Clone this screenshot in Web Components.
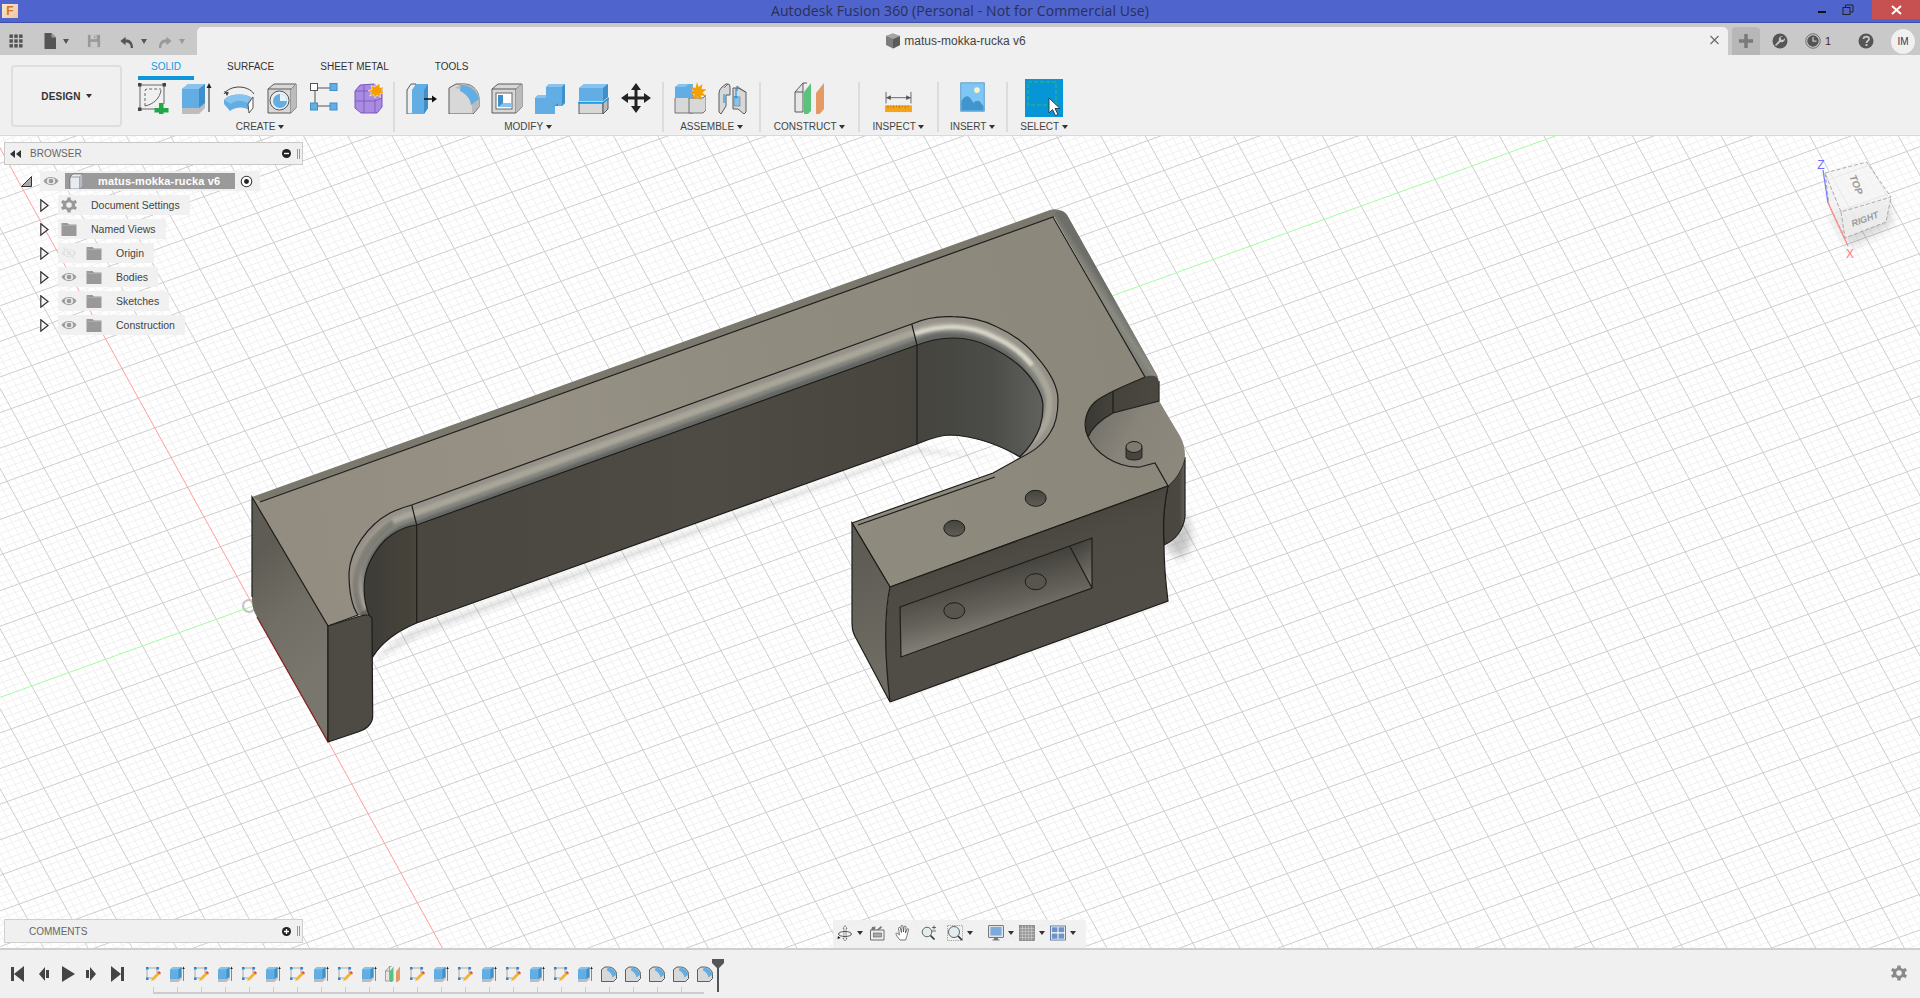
<!DOCTYPE html>
<html>
<head>
<meta charset="utf-8">
<title>Fusion 360</title>
<style>
  html, body { margin: 0; height: 100%; overflow: hidden; background: #f0f0f0; font-family: "Liberation Sans", Arial, sans-serif; }
  body { display: flex; flex-direction: column; height: 998px; }
</style>
</head>
<body>
<fx-titlebar></fx-titlebar>
<fx-tabbar></fx-tabbar>
<fx-toolbar></fx-toolbar>
<fx-viewport></fx-viewport>
<fx-timeline></fx-timeline>

<script>
// all icons on a 32x32 box
const GR = '#d8d8d8', OUT = '#5a5a5a', BL = '#62ade4', BLD = '#3f8fc9', BLL = '#86c3ef';
const ICONS = {
  sketch: `<g fill="none" stroke="#666" stroke-width="1"><path d="M3 3H27M3 3V27M3 27H22M27 3V22"/><path d="M8 24V9q0-2 2-2H24" stroke-dasharray="3 2"/><path d="M8 24C17 22 23 16 24 8"/></g>
    <g fill="#444"><rect x="1" y="1" width="3.5" height="3.5"/><rect x="25.5" y="1" width="3.5" height="3.5"/><rect x="1" y="25.5" width="3.5" height="3.5"/></g>
    <path d="M22 21h4.5v5H31.500v4.500H26.500V32H22V30.500H17.500V26H22z" fill="#22a64a"/>`,
  extrude: `<path d="M2 7l6-5h17v22l-6 5H2z" fill="${BL}"/><path d="M2 7l6-5h17l-6 5z" fill="${BLL}"/><path d="M19 7l6-5v22l-6 5z" fill="${BLD}"/>
    <path d="M2 26h17l6-5v5l-6 6H2z" fill="#bdbdbd"/><path d="M29 30V4" stroke="#222" stroke-width="1" /><path d="M29 1l-2.500 5h5z" fill="#222"/>`,
  revolve: `<path d="M1 12C4 7 11 5 16 5s12 2 15 7" fill="none" stroke="#444" stroke-width="1"/><path d="M1 9l3 5 2-3.500z" fill="#444"/>
    <path d="M1 18C6 11 24 11 29 16l-3 12c-6-4-14-3-19 1l-6-7z" fill="${BL}"/><path d="M1 18C6 11 24 11 29 16l-5 5c-5-3-12-3-16 1z" fill="${BLL}"/>
    <path d="M25 22l5-7v11l-4 5z" fill="#fff" stroke="#555"/>`,
  hole: `<path d="M2 7l6-5h22v24l-5 5H2z" fill="${GR}" stroke="${OUT}"/><path d="M2 7h23v24M25 7l5-5" fill="none" stroke="${OUT}"/><path d="M25 7l5-5v24l-5 5z" fill="#bbb"/>
    <circle cx="13.500" cy="18.500" r="9.500" fill="#eee" stroke="#555"/><circle cx="14" cy="19" r="7" fill="${BL}"/><path d="M14 12a7 7 0 0 1 7 7h-7z" fill="#e8f3fb"/>`,
  pattern: `<g stroke="#555"><path d="M6 6H22M6 6V24M6 24H22" fill="none"/><rect x="1.500" y="1.500" width="7" height="7" fill="#fff"/></g>
    <g fill="${BL}" stroke="${BLD}"><rect x="21" y="1.500" width="7" height="7"/><rect x="1.500" y="21" width="7" height="7"/><rect x="21" y="21" width="7" height="7"/></g>`,
  form: `<path d="M3 9l5-6 14-1 8 6v17l-5 6H9l-6-5z" fill="#a98be0" stroke="#7a55c4"/><path d="M3 9h20l7-2M23 9v22M3 19h20l7-3M12 3v28" fill="none" stroke="#7a55c4" stroke-width=".8"/>
    <path d="M23 0l1.500 4 3-3 .5 4.500 4-.5-2.500 3.500 2.500 2.500-4 .5.500 4-3.500-2.500-2 3.500-1.500-4-4 1.500 2-3.500-3.500-2 4-1-1-4 4 1.500z" fill="#f5a000" stroke="#fff" stroke-width=".5"/>`,
  presspull: `<path d="M2 8l4-6h5v30H2z" fill="#eee" stroke="${OUT}"/><path d="M7 8l4-6h12v24l-4 6H7z" fill="${BL}"/><path d="M19 8l4-6v24l-4 6z" fill="${BLD}"/>
    <path d="M19 17H29" stroke="#111" stroke-width="1.500"/><path d="M32 17l-5-3.500v7z" fill="#111"/>`,
  fillet: `<path d="M1 6l7-4h8c9 0 15 7 15 15v8l-6 7H1z" fill="${GR}" stroke="${OUT}"/><path d="M24 31c1-14-3-22-17-25l7-4c10 0 17 6 17 14v9z" fill="#bbb"/><path d="M13 3c9 0 16 6 18 14l-8 6c-1-7-5-11-11-14z" fill="${BL}"/>`,
  shell: `<path d="M1 7l6-5h24v23l-6 6H1z" fill="${GR}" stroke="${OUT}"/><path d="M1 7h24v24M25 7l6-5" fill="none" stroke="${OUT}"/><path d="M25 7l6-5v23l-6 6z" fill="#bbb"/>
    <rect x="5" y="11" width="16" height="16" fill="#fff" stroke="#666"/><path d="M7 13h5v8h8v4H7z" fill="${BLD}"/><path d="M12 13h8v8h-8z" fill="#fff"/><path d="M12 21h8v4H7z" fill="${BLL}"/>`,
  combine: `<path d="M1 16l3-3h8V5l3-3h16v19l-3 3h-7v8H1z" fill="${BL}"/><path d="M12 5l3-3h16l-3 3zM1 16l3-3h8v3z" fill="${BLL}"/><path d="M28 5l3-3v19l-3 3zM19 24h5v-3l-5 4z" fill="${BLD}"/>`,
  split: `<path d="M2 6l5-4h24v13l-5 4-24 0z" fill="${BL}"/><path d="M2 6l5-4h24l-5 4z" fill="${BLL}"/><path d="M26 6l5-4v13l-5 4z" fill="${BLD}"/>
    <path d="M2 21h24v11H2z" fill="${GR}" stroke="${OUT}"/><path d="M26 21l5-4v10l-5 5z" fill="#bbb" stroke="${OUT}"/><path d="M1 20.500H26L32 16" fill="none" stroke="#1a9ce6" stroke-width="1.500"/>`,
  move: `<path d="M16 1l5 7h-3.500v6.500H24V11l7 5-7 5v-3.500h-6.500V24H21l-5 7-5-7h3.500v-6.500H8V21l-7-5 7-5v3.500h6.500V8H11z" fill="#222"/>`,
  newcomp: `<path d="M1 16l4-3h14v18H1z" fill="${GR}" stroke="${OUT}" stroke-width=".8"/><path d="M15 16h14l3-3v15l-3 3H15z" fill="${GR}" stroke="${OUT}" stroke-width=".8"/>
    <path d="M1 5l4-3h14l-1 14H1z" fill="${BL}"/><path d="M1 5l4-3h10l-4 3z" fill="${BLL}"/>
    <path d="M23 0l1.500 5 4-3-1 5 5 .5-4 3 3.500 3.500-5-.5-.5 5-3-4-4 3 1-5-5-1 4-3-3-4 5 1.500z" fill="#f5a000"/>`,
  joint: `<path d="M2 11q0-3 3-6l4-3h2q2 0 2 3v8H9V24l-5 8-2-2z" fill="${GR}" stroke="${OUT}"/><path d="M16 6l5 0 8 4v20l-2 2-6-5h-5z" fill="${GR}" stroke="${OUT}"/><path d="M20 4l8 6M20 4v5M7 6l4-4" fill="none" stroke="${OUT}" stroke-width=".8"/>
    <rect x="17" y="15" width="6" height="9" fill="${BLL}" stroke="#777" stroke-width=".6"/><path d="M19 6V16M7 12v9" stroke="#1a9ce6" stroke-width="1.200" fill="none"/><path d="M19 17l-2-3h4z" fill="#1a9ce6"/>`,
  construct: `<path d="M1 10l8-9v29H1z" fill="#e6e6e6" stroke="${OUT}"/><path d="M1 10h8M9 1l4 0" fill="none" stroke="${OUT}"/><path d="M10 10l7-9v28l-7 7z" fill="#5cc17d"/><path d="M22 11l8-10v26l-8 9z" fill="#e59a66"/>`,
  inspect: `<g fill="none" stroke="#666" stroke-width="1"><path d="M2 2V14M28 2V14M2 8H28"/></g><path d="M2 8l5-2.500v5zM28 8l-5-2.500v5z" fill="#555"/><rect x="1" y="16" width="28" height="7" fill="#f5a41b"/><path d="M4 16v3M7 16v2M10 16v3M13 16v2M16 16v3M19 16v2M22 16v3M25 16v2" stroke="#a86a00" stroke-width=".7"/>`,
  insert: `<rect x="1" y="1" width="29" height="35" fill="#7fc6f4" stroke="#4a95c7"/><circle cx="21" cy="10" r="3.500" fill="#f7f4c9"/><path d="M2 35V23c5-7 9-7 12-1l3 4c2-4 7-4 9 0l3 4v5z" fill="#3f95cc"/>`,
  select: `<rect width="38" height="38" fill="#0696d7"/><rect x="3" y="3" width="28" height="23" fill="none" stroke="#3fb868" stroke-width="1" stroke-dasharray="4 2"/><path d="M24 19v15l3.500-3.500 3 6 2.500-1-3-6h5z" fill="#fff" stroke="#333" stroke-width=".9"/>`,
  // timeline only
  tlsketch: `<g fill="none" stroke="#666" stroke-width="1"><path d="M4 4H24M4 4V24M4 24H14M24 4V14"/></g><g fill="#2289d8"><rect x="2" y="2" width="5" height="5"/><rect x="23" y="2" width="5" height="5"/><rect x="2" y="23" width="5" height="5"/></g>
    <path d="M12 30l2-6 12-12 4 4-12 12z" fill="#f0b33a"/><path d="M25 13l3-3 4 4-2 3z" fill="#e0503a"/>`,
  tlfillet: `<path d="M1 7l7-5h7c9 0 16 7 16 15v8l-6 6H1z" fill="${GR}" stroke="#333" stroke-width="1.500"/><path d="M13 3c9 0 16 6 18 14l-8 6c-1-7-5-11-11-14z" fill="${BL}"/>`,
  // browser, top bars, nav
  eye: `<path d="M1 16C8 5 24 5 31 16 24 27 8 27 1 16z" fill="#999"/><ellipse cx="16" cy="16" rx="8.500" ry="6.500" fill="#e8e8e8"/><circle cx="16" cy="16" r="4.500" fill="#999"/>`,
  eyeoff: `<path d="M1 16C8 5 24 5 31 16 24 27 8 27 1 16z" fill="#e2e2e2"/><ellipse cx="16" cy="16" rx="8.500" ry="6.500" fill="#f3f3f3"/><circle cx="16" cy="16" r="4.500" fill="#e2e2e2"/><path d="M5 5L27 27" stroke="#e2e2e2" stroke-width="2.500"/>`,
  folder: `<path d="M1 4h12l3 3h15v23H1z" fill="#999"/><path d="M1 9h30" stroke="#bbb" stroke-width="1"/>`,
  gear: `<path d="M13 1h6l1 5 4 2 5-2 3 5-4 3v4l4 3-3 5-5-2-4 2-1 5h-6l-1-5-4-2-5 2-3-5 4-3v-4l-4-3 3-5 5 2 4-2z" fill="#999"/><circle cx="16" cy="16" r="5.500" fill="#f0f0f0"/>`,
  box: `<path d="M4 8l6-6h19v24l-6 6H4z" fill="#e8ebf1" stroke="#444"/><path d="M4 8h19v24M23 8l6-6" fill="none" stroke="#444"/><path d="M23 8l6-6v24l-6 6z" fill="#b9bcc4"/>`,
  target: `<circle cx="16" cy="16" r="13" fill="#fff" stroke="#333" stroke-width="2.500"/><circle cx="16" cy="16" r="6" fill="#222"/>`,
  docbox: `<path d="M2 6l14-5 14 5v18L16 31 2 24z" fill="#7d7d7d"/><path d="M16 12L30 6v18L16 31z" fill="#5c5c5c"/><path d="M2 6l14 6L30 6 16 1z" fill="#a6a6a6"/>`,
  apps: `<g fill="#555"><rect x="1" y="1" width="8" height="8"/><rect x="12" y="1" width="8" height="8"/><rect x="23" y="1" width="8" height="8"/><rect x="1" y="12" width="8" height="8"/><rect x="12" y="12" width="8" height="8"/><rect x="23" y="12" width="8" height="8"/><rect x="1" y="23" width="8" height="8"/><rect x="12" y="23" width="8" height="8"/><rect x="23" y="23" width="8" height="8"/></g>`,
  file: `<path d="M5 0h14l9 9v23H5z" fill="#555"/><path d="M19 0v9h9z" fill="#999"/>`,
  save: `<path d="M2 2h28v28H2z" fill="#999"/><rect x="8" y="2" width="14" height="10" fill="#c8c8c8"/><rect x="16" y="4" width="3" height="6" fill="#999"/><rect x="8" y="18" width="16" height="12" fill="#c8c8c8"/>`,
  undo: `<path d="M14 6L3 15l11 9v-6c7 0 11 3 11 12h5c0-13-6-19-16-19z" fill="#555"/>`,
  redo: `<path d="M18 6l11 9-11 9v-6c-7 0-11 3-11 12H2c0-13 6-19 16-19z" fill="#999"/>`,
  wrench: `<circle cx="16" cy="16" r="15" fill="#555"/><path d="M22 6a7 7 0 0 0-8 9L6 24l2 2 9-8a7 7 0 0 0 9-8l-4 4-4-1-1-4z" fill="#c8c8c8"/>`,
  clock: `<circle cx="16" cy="16" r="14.500" fill="none" stroke="#555" stroke-width="1.500"/><circle cx="16" cy="16" r="11.500" fill="#555"/><path d="M16 8v8h7" fill="none" stroke="#c8c8c8" stroke-width="2.500"/>`,
  help: `<circle cx="16" cy="16" r="15" fill="#555"/><path d="M11 12q0-5 5.500-5t5.500 5c0 4-5 4-5 8" fill="none" stroke="#c8c8c8" stroke-width="3.500"/><rect x="15" y="22" width="4" height="4" fill="#c8c8c8"/>`,
  orbit: `<path d="M16 1l4 6h-2v20h2l-4 5-4-5h2V7h-2z" fill="#fff" stroke="#333"/><ellipse cx="16" cy="18" rx="13" ry="5" fill="none" stroke="#333" stroke-width="1.600"/><path d="M2 22l5 4-6 2z" fill="#111"/>`,
  lookat: `<path d="M3 10V30H30V10z" fill="#eee" stroke="#444" stroke-width="1.500"/><path d="M4 10l2-6 7-1-1 7zM15 10l9-8 2 3-6 5z" fill="#777"/><rect x="9" y="16" width="16" height="8" fill="#aaa" stroke="#444"/>`,
  hand: `<path d="M10 30C6 26 2 20 2 17c1-2 3-1 7 3L7 7c0-3 3-3 4 0l2 8-1-12c0-3 4-3 4 0l1 11 1-10c1-3 4-2 4 0l-1 12 3-7c1-3 4-2 3 1l-3 11c-1 5-2 6-3 9z" fill="#fff" stroke="#333" stroke-width="1.300"/>`,
  zoom: `<circle cx="12" cy="14" r="9.500" fill="#e3edf0" stroke="#555" stroke-width="1.800"/><path d="M19 21l8 8" stroke="#333" stroke-width="3.500"/><path d="M26 1v8M22 5h8M22 12h8" stroke="#333" stroke-width="1.400" fill="none"/>`,
  fit: `<rect x="1" y="1" width="30" height="30" fill="none" stroke="#555" stroke-dasharray="2.500 2"/><circle cx="14" cy="14" r="11" fill="#e3edf0" stroke="#555" stroke-width="1.800"/><path d="M22 22l8 8" stroke="#333" stroke-width="3.500"/>`,
  display: `<rect x="1" y="1" width="30" height="24" rx="1" fill="#dfe3ea" stroke="#555" stroke-width="1.500"/><rect x="5" y="4" width="22" height="17" fill="#7da9dc"/><path d="M12 25h8v4h3v2H9v-2h3z" fill="#777"/>`,
  gridv: `<rect x="1" y="1" width="30" height="30" fill="#999" stroke="#555"/><path d="M7 1v30M13 1v30M19 1v30M25 1v30M1 7h30M1 13h30M1 19h30M1 25h30" stroke="#d6d6d6" stroke-width="1"/>`,
  views: `<rect x="1" y="2" width="30" height="28" fill="#fff" stroke="#30558f" stroke-width="1.500"/><g fill="#6f93c6"><rect x="3.500" y="4.500" width="11.500" height="10"/><rect x="17" y="4.500" width="11.500" height="10"/><rect x="3.500" y="17" width="11.500" height="10.500"/><rect x="17" y="17" width="11.500" height="10.500"/></g>`
};
const svgIcon = (name, w, h, vb) => `<svg xmlns="http://www.w3.org/2000/svg" width="${w}" height="${h || w}" viewBox="${vb || '0 0 32 32'}" style="display:block;flex:none">${ICONS[name]}</svg>`;
const caret = `<span style="display:inline-block;width:0;height:0;border:solid transparent;border-width:4px 3px 0;border-top-color:#333;vertical-align:middle"></span>`;

class FxTitlebar extends HTMLElement {
  constructor() {
    super();
    this.attachShadow({ mode: 'open' }).innerHTML = `
      <style>
        :host { display: flex; align-items: center; justify-content: center; position: relative; height: 23px; box-sizing: border-box; background: #4f64cd; border-bottom: 1px solid #3c4ea8; flex: none; }
        span { font: 14px/22px "Open Sans", sans-serif; color: #28305a; letter-spacing: .09px; }
        .logo, .win { position: absolute; top: 0; }
        .logo { left: 2px; top: 4px; width: 16px; height: 14px; background: linear-gradient(135deg, #f9e6d4, #f1c59c); display: flex; align-items: center; justify-content: center; font: bold 12px "Liberation Sans", sans-serif; color: #d2761f; }
        .win { right: 0; display: flex; height: 19px; align-items: center; }
        .close { width: 48px; height: 19px; background: #c75050; display: flex; align-items: center; justify-content: center; margin-left: 9px; }
      </style>
      <div class="logo">F</div>
      <span>Autodesk Fusion 360 (Personal - Not for Commercial Use)</span>
      <div class="win">
        <svg width="45" height="19" viewBox="0 0 45 19"><rect x="0" y="11" width="8" height="2" fill="#111"/><rect x="25" y="7.500" width="7" height="7" fill="none" stroke="#222"/><path d="M27.500 7V5H35V12H32.500" fill="none" stroke="#222"/></svg>
        <div class="close"><svg width="11" height="10" viewBox="0 0 11 10"><path d="M1 1L10 9M10 1L1 9" stroke="#fff" stroke-width="2"/></svg></div>
      </div>`;
  }
}

class FxTabbar extends HTMLElement {
  constructor() {
    super();
    const ic = (n, ml, s) => `<span style="margin-left:${ml}px;display:block">${svgIcon(n, s || 15)}</span>`;
    this.attachShadow({ mode: 'open' }).innerHTML = `
      <style>
        :host { display: flex; height: 32px; padding-top: 4px; box-sizing: border-box; background: #c9c9c9; border-top: 0; flex: none; position: relative; }
        .quick { width: 197px; display: flex; align-items: center; height: 28px; flex: none; }
        .doc { width: 1531px; background: #f0f0f0; border-radius: 5px 5px 0 0; display: flex; align-items: center; justify-content: center; position: relative; font: 12px "Liberation Sans", sans-serif; color: #444; padding-right: 14px; box-sizing: border-box; }
        .doc svg { margin-right: 3px; }
        .x { position: absolute; right: 6px; top: 8px; }
        .plus { width: 28px; margin-left: 4px; background: #b7b7b7; border-radius: 4px 4px 0 0; display: flex; align-items: center; justify-content: center; flex: none; }
        .right { display: flex; align-items: center; }
        .num { font: 11px "Liberation Sans", sans-serif; color: #522; margin-left: 4px; }
        .avatar { width: 24px; height: 25px; border-radius: 50%; background: #f0f0f0; margin-left: 17px; display: flex; align-items: center; justify-content: center; font: 10px "Liberation Sans", sans-serif; color: #335; }
        .c { display: inline-block; width: 0; height: 0; border: solid transparent; border-width: 5px 3.500px 0; margin-left: 5px; }
      </style>
      <div class="quick">
        ${ic('apps', 9, 14)}
        ${ic('file', 19, 16)}<i class="c" style="border-top-color:#555"></i>
        ${ic('save', 18, 14)}
        ${ic('undo', 18, 15)}<i class="c" style="border-top-color:#555;margin-left:7px"></i>
        ${ic('redo', 11, 15)}<i class="c" style="border-top-color:#999;margin-left:6px"></i>
      </div>
      <div class="doc">
        ${svgIcon('docbox', 16)}<span>matus-mokka-rucka v6</span>
        <svg class="x" width="9" height="10" viewBox="0 0 9 10"><path d="M.5 1L8.500 9M8.500 1L.5 9" stroke="#666" stroke-width="1.100"/></svg>
      </div>
      <div class="plus"><svg width="14" height="14" viewBox="0 0 14 14"><path d="M7 0V14M0 7H14" stroke="#7a7a7a" stroke-width="3.500"/></svg></div>
      <div class="right">
        ${ic('wrench', 12, 16)}
        ${ic('clock', 17, 16)}<span class="num">1</span>
        ${ic('help', 27, 16)}
        <div class="avatar">IM</div>
      </div>`;
  }
}

class FxToolGroup extends HTMLElement {
  constructor() {
    super();
    const icons = (this.getAttribute('icons') || '').split(' ');
    const w = this.getAttribute('w');
    const pr = this.getAttribute('pr') || 0;
    const line = this.hasAttribute('last') ? '' : 'border-right:2px solid #dcdcdc;';
    const cells = icons.map(n => {
      if (n === 'inspect') return `<div class="cell" style="width:43px;padding-top:8px">${svgIcon(n, 29, 24, '0 0 30 25')}</div>`;
      if (n === 'insert') return `<div class="cell">${svgIcon(n, 29, 30, '0 0 31 37')}</div>`;
      if (n === 'select') return `<div class="cell" style="margin-top:-3px">${svgIcon(n, 38, 38, '0 0 38 38')}</div>`;
      return `<div class="cell">${svgIcon(n, 32)}</div>`;
    }).join('');
    this.attachShadow({ mode: 'open' }).innerHTML = `
      <style>
        :host { display: flex; flex-direction: column; align-items: center; width: ${w}px; box-sizing: border-box; ${line} padding-right: ${pr}px; height: 50px; flex: none; }
        .icons { display: flex; height: 34px; flex: none; }
        .cell { width: 43px; display: flex; justify-content: center; box-sizing: border-box; }
        .label { font: 10px/14px "Liberation Sans", sans-serif; color: #444; margin-top: 4px; white-space: nowrap; flex: none; }
      </style>
      <div class="icons">${cells}</div>
      <div class="label">${this.getAttribute('label')} ${caret}</div>`;
  }
}

class FxToolbar extends HTMLElement {
  constructor() {
    super();
    this.attachShadow({ mode: 'open' }).innerHTML = `
      <style>
        :host { display: flex; height: 81px; background: #f0f0f0; border-bottom: 1px solid #d9d9d9; box-sizing: border-box; padding-left: 11px; flex: none; }
        .design { width: 111px; height: 62px; margin-top: 10px; box-sizing: border-box; border: 2px solid #dedede; border-radius: 4px; display: flex; align-items: center; justify-content: center; gap: 5px; font: bold 10px "Liberation Sans", sans-serif; color: #333; letter-spacing: .2px; }
        .main { margin-left: 10px; display: flex; flex-direction: column; }
        .tabs { display: flex; gap: 20px; margin-left: 6px; height: 25px; font: 10px "Liberation Sans", sans-serif; color: #333; }
        .tabs div { padding: 6px 13px 0; box-sizing: border-box; height: 25px; line-height: 12px; }
        .tabs .on { color: #0f9be3; border-bottom: 4px solid #0f96d9; }
        .groups { display: flex; margin-top: 2px; }
      </style>
      <div class="design">DESIGN ${caret}</div>
      <div class="main">
        <div class="tabs"><div class="on">SOLID</div><div>SURFACE</div><div>SHEET METAL</div><div>TOOLS</div></div>
        <div class="groups">
          <fx-tool-group label="CREATE" w="263" pr="5" icons="sketch extrude revolve hole pattern form"></fx-tool-group>
          <fx-tool-group label="MODIFY" w="269" pr="1" icons="presspull fillet shell combine split move"></fx-tool-group>
          <fx-tool-group label="ASSEMBLE" w="97" icons="newcomp joint"></fx-tool-group>
          <fx-tool-group label="CONSTRUCT" w="99" icons="construct"></fx-tool-group>
          <fx-tool-group label="INSPECT" w="79" icons="inspect"></fx-tool-group>
          <fx-tool-group label="INSERT" w="69" icons="insert"></fx-tool-group>
          <fx-tool-group label="SELECT" w="72" icons="select" last></fx-tool-group>
        </div>
      </div>`;
  }
}

class FxTreeRow extends HTMLElement {
  constructor() {
    super();
    const eye = this.getAttribute('eye');
    const ic = this.getAttribute('icon');
    this.attachShadow({ mode: 'open' }).innerHTML = `
      <style>
        :host { display: flex; align-items: center; height: 20px; margin-bottom: 4px; padding-left: 36px; font: 10.500px "Liberation Sans", sans-serif; color: #444; }
        .bg { display: flex; align-items: center; height: 20px; margin-left: 9px; padding: 0 10px 0 3px; background: rgba(240,240,240,.92); white-space: nowrap; }
        .gap { width: 9px; } .gap2 { width: 14px; }
      </style>
      <svg width="9" height="13" viewBox="0 0 9 13" style="flex:none"><path d="M.8 .8L8 6.500.8 12.200z" fill="#f5f5f5" stroke="#333" stroke-width="1.200"/></svg>
      <div class="bg">
        ${eye ? svgIcon(eye, 16) + '<div class="gap"></div>' : ''}
        ${svgIcon(ic, 16)}<div class="gap2"></div>
        <slot></slot>
      </div>`;
  }
}

class FxBrowser extends HTMLElement {
  constructor() {
    super();
    this.attachShadow({ mode: 'open' }).innerHTML = `
      <style>
        :host { position: absolute; left: 4px; top: 6px; width: 299px; display: block; }
        .head { height: 23px; background: #f0f0f0; border: 1px solid #c9c9c9; box-sizing: border-box; display: flex; align-items: center; font: 10px "Liberation Sans", sans-serif; color: #666; padding-left: 5px; }
        .head span { margin-left: 9px; }
        .dot { margin-left: auto; margin-right: 6px; }
        .root { display: flex; align-items: center; height: 20px; margin: 6px 0 4px 17px; }
        .rbg { display: flex; align-items: center; height: 20px; width: 220px; margin-left: 8px; background: rgba(240,240,240,.92); padding-left: 3px; box-sizing: border-box; }
        .bar { display: flex; align-items: center; width: 170px; height: 16px; background: #9a9a9a; margin-left: 6px; font: bold 11px "Liberation Sans", sans-serif; color: #fff; white-space: nowrap; padding-left: 3px; box-sizing: border-box; }
        .bar span { margin-left: 14px; letter-spacing: .15px; }
      </style>
      <div class="head">
        <svg width="11" height="8" viewBox="0 0 11 8"><path d="M5 0v8L0 4zM11 0v8L6 4z" fill="#333"/></svg>
        <span>BROWSER</span>
        <svg class="dot" width="9" height="9" viewBox="0 0 9 9"><circle cx="4.500" cy="4.500" r="4.500" fill="#222"/><rect x="2" y="3.800" width="5" height="1.400" fill="#fff"/></svg>
        <svg width="3" height="10" viewBox="0 0 3 10" style="margin-right:2px"><path d="M.5 0V10M2.500 0V10" stroke="#999"/></svg>
      </div>
      <div class="root">
        <svg width="11" height="11" viewBox="0 0 11 11" style="flex:none"><path d="M10.500 .5V10.500H.5z" fill="#aaa" stroke="#333"/></svg>
        <div class="rbg">
          ${svgIcon('eye', 16)}
          <div class="bar">${svgIcon('box', 16)}<span>matus-mokka-rucka v6</span></div>
          <span style="margin-left:5px">${svgIcon('target', 13)}</span>
        </div>
      </div>
      <fx-tree-row icon="gear">Document Settings</fx-tree-row>
      <fx-tree-row icon="folder">Named Views</fx-tree-row>
      <fx-tree-row eye="eyeoff" icon="folder">Origin</fx-tree-row>
      <fx-tree-row eye="eye" icon="folder">Bodies</fx-tree-row>
      <fx-tree-row eye="eye" icon="folder">Sketches</fx-tree-row>
      <fx-tree-row eye="eye" icon="folder">Construction</fx-tree-row>`;
  }
}

class FxComments extends HTMLElement {
  constructor() {
    super();
    this.attachShadow({ mode: 'open' }).innerHTML = `
      <style>
        :host { position: absolute; left: 4px; bottom: 5px; width: 299px; height: 24px; box-sizing: border-box; background: #f0f0f0; border: 1px solid #d0d0d0; display: flex; align-items: center; font: 10px "Liberation Sans", sans-serif; color: #666; padding-left: 24px; }
        svg.p { margin-left: auto; margin-right: 6px; }
      </style>
      <span>COMMENTS</span>
      <svg class="p" width="9" height="9" viewBox="0 0 9 9"><circle cx="4.500" cy="4.500" r="4.500" fill="#222"/><path d="M2 4.500H7M4.500 2V7" stroke="#fff" stroke-width="1.300"/></svg>
      <svg width="3" height="10" viewBox="0 0 3 10" style="margin-right:2px"><path d="M.5 0V10M2.500 0V10" stroke="#999"/></svg>`;
  }
}

class FxNavbar extends HTMLElement {
  constructor() {
    super();
    const c = `<i style="display:block;width:0;height:0;border:solid transparent;border-width:4px 3px 0;border-top-color:#333;margin:0 0 0 4px"></i>`;
    const b = (n, ml) => `<span style="margin-left:${ml}px">${svgIcon(n, 16)}</span>`;
    this.attachShadow({ mode: 'open' }).innerHTML = `
      <style>
        :host { position: absolute; left: 833px; bottom: 0; width: 253px; height: 28px; padding-bottom: 3px; box-sizing: border-box; display: flex; align-items: center; background: rgba(240,240,240,.9); }
      </style>
      ${b('orbit', 4)}${c}${b('lookat', 6)}${b('hand', 10)}${b('zoom', 10)}${b('fit', 10)}${c}${b('display', 15)}${c}${b('gridv', 5)}${c}${b('views', 5)}${c}`;
  }
}

class FxViewport extends HTMLElement {
  constructor() {
    super();
    this.attachShadow({ mode: 'open' }).innerHTML = `
      <style>
        :host { display: block; position: relative; flex: 1; background: #fff; overflow: hidden; }
        svg.canvas { position: absolute; left: 0; top: 0; display: block; }
      </style>
      <svg class="canvas" width="1920" height="812" viewBox="0 136 1920 812">${this.grid()}${this.model()}${this.cube()}</svg>
      <fx-browser></fx-browser>
      <fx-comments></fx-comments>
      <fx-navbar></fx-navbar>`;
  }

  // the floor grid is orthographic: two families of parallel lines
  grid() {
    const ox = 253.3, oy = 606, a = 0.553, b = -0.361, da = 44.3, db = 35.6;
    const lineA = k => { const x = ox + k * da; return `M${(x + a * (136 - oy)).toFixed(1)} 136L${(x + a * (948 - oy)).toFixed(1)} 948`; };
    const lineB = k => { const y = oy + k * db; return `M0 ${(y + b * (0 - ox)).toFixed(1)}L1920 ${(y + b * (1920 - ox)).toFixed(1)}`; };
    let minor = '', major = '';
    for (let i = -200; i <= 250; i++) {
      const k = i / 5;
      if (i % 5 === 0) { if (i) major += lineA(k); } else minor += lineA(k);
    }
    for (let i = -150; i <= 150; i++) {
      const k = i / 5;
      if (i % 5 === 0) { if (i) major += lineB(k); } else minor += lineB(k);
    }
    return `<path d="${minor}" stroke="#f1f1f1" stroke-width="1" fill="none"/>
      <path d="${major}" stroke="#cecece" stroke-width="1" fill="none"/>
      <path d="${lineA(0)}" stroke="#ff9d9d" stroke-width="1" fill="none"/>
      <path d="${lineB(0)}" stroke="#a4fba4" stroke-width="1" fill="none"/>
      <circle cx="249" cy="606" r="6" fill="none" stroke="#c4c4c4" stroke-width="2"/>`;
  }

  model() {
    const K = 'stroke="#1e1d1a" stroke-width="1.200" fill="none"';
    const U = `M358,615 C351,605 349,590 349,573 C350,550 368,525 390,513 C398,509 405,507 411.7,505 L911.7,324 C925,318 940,316 953,316.7 C970,317 985,321 996.7,326.7 C1015,335 1028,346 1036.7,356.7 C1050,372 1058,388 1058,400 C1058,415 1055,426 1050,433 C1042,446 1032,452 1020,458`;
    const L = `M369,615 C365,605 363,592 365,576.7 C367,565 372,557 376.7,550 C383,541 390,535 396.7,531.7 C403,528 410,526 416.7,525 L917,345 C930,340 942,338 953,338 C967,338 979,341 990,346.7 C1005,354 1018,363 1026.7,373 C1037,385 1043,396 1043,406.7 C1043,414 1042,420 1040,426.7 C1036,438 1028,449 1020,456.7`;
    const bottom = `C1003,447 978,436 950,435 C938,435 927,440 917,444 L416.7,623 C400,630 383,640 372.7,657 L369,615`;
    const cavity = U + ' ' + bottom + ' Z';
    const wall = L + ' ' + bottom + ' Z';
    const T = `M260,502 L1053,217 L1145,377 C1125,386 1105,393 1095,402 C1086,410 1082,425 1088,437 C1095,452 1115,468 1140,467 L1155,463 L1168,486 L890,587 L852,523 L993,473 L1020,458 C1032,452 1042,446 1050,433 C1055,426 1058,415 1058,400 C1058,388 1050,372 1036.7,356.7 C1028,346 1015,335 996.7,326.7 C985,321 970,317 953,316.7 C940,316 925,318 911.7,324 L411.7,505 C405,507 398,509 390,513 C368,525 350,550 349,573 C349,590 351,605 358,615 L328,626 L252,497 Z`;
    const disk = `M1159,401 L1180,436 C1184,443 1185,450 1185,457 C1183,467 1177,478 1168,486 L1155,463 L1140,467 C1115,468 1095,452 1088,437 C1092,428 1102,419 1113,413 Z`;
    const back = `M1168,486 C1177,478 1183,467 1185,457 V517 C1183,530 1175,540 1164,545 C1163,525 1163,510 1168,486 Z`;
    const front = `M890,587 L1168,486 C1163,510 1163,525 1164,545 C1164,565 1166,585 1168,601 L890,702 C884,660 884,620 890,587 Z`;
    const side = `M852,523 L890,587 C885,610 884,650 890,702 L857,640 C852,632 852,628 852,623 Z`;
    return `<defs>
        <filter id="b5" x="-30%" y="-30%" width="160%" height="160%"><feGaussianBlur stdDeviation="5"/></filter>
        <filter id="b3" x="-10%" y="-30%" width="120%" height="160%"><feGaussianBlur stdDeviation="2.500"/></filter>
        <filter id="b1" x="-5%" y="-5%" width="110%" height="110%"><feGaussianBlur stdDeviation="1"/></filter>
        <clipPath id="cav"><path d="${cavity}"/></clipPath>
        <linearGradient id="gWall" gradientUnits="userSpaceOnUse" x1="372" y1="0" x2="1045" y2="0">
          <stop offset="0" stop-color="#3f3d38"/><stop offset=".055" stop-color="#454339"/><stop offset=".066" stop-color="#4a4740"/><stop offset=".5" stop-color="#4e4b44"/><stop offset=".8" stop-color="#47453e"/><stop offset=".81" stop-color="#45443e"/><stop offset=".92" stop-color="#4b4c48"/><stop offset="1" stop-color="#62635f"/>
        </linearGradient>
        <linearGradient id="gTop" gradientUnits="userSpaceOnUse" x1="300" y1="560" x2="1150" y2="400">
          <stop offset="0" stop-color="#928d80"/><stop offset=".3" stop-color="#969184"/><stop offset=".6" stop-color="#8f8b7f"/><stop offset="1" stop-color="#8b877b"/>
        </linearGradient>
        <linearGradient id="gLeft" gradientUnits="userSpaceOnUse" x1="250" y1="560" x2="330" y2="660">
          <stop offset="0" stop-color="#5e5c54"/><stop offset=".5" stop-color="#716e65"/><stop offset="1" stop-color="#79766d"/>
        </linearGradient>
        <linearGradient id="gLeft2" gradientUnits="userSpaceOnUse" x1="852" y1="560" x2="890" y2="660">
          <stop offset="0" stop-color="#5e5c55"/><stop offset="1" stop-color="#6e6b62"/>
        </linearGradient>
        <linearGradient id="gCham" gradientUnits="userSpaceOnUse" x1="1100" y1="310" x2="1115" y2="300">
          <stop offset="0" stop-color="#777a74"/><stop offset=".5" stop-color="#8b8b82"/><stop offset="1" stop-color="#6d6e68"/>
        </linearGradient>
        <linearGradient id="gFront" gradientUnits="userSpaceOnUse" x1="1000" y1="520" x2="1030" y2="620">
          <stop offset="0" stop-color="#45433c"/><stop offset=".4" stop-color="#4e4b44"/><stop offset="1" stop-color="#504d46"/>
        </linearGradient>
        <linearGradient id="gHole" gradientUnits="userSpaceOnUse" x1="980" y1="560" x2="1000" y2="640">
          <stop offset="0" stop-color="#3c3a35"/><stop offset=".6" stop-color="#65635b"/><stop offset="1" stop-color="#8c8980"/>
        </linearGradient>
        <linearGradient id="gHoleR" gradientUnits="userSpaceOnUse" x1="1070" y1="550" x2="1092" y2="585">
          <stop offset="0" stop-color="#46443f"/><stop offset="1" stop-color="#7a7870"/>
        </linearGradient>
        <linearGradient id="gNotch" gradientUnits="userSpaceOnUse" x1="1084" y1="0" x2="1160" y2="0">
          <stop offset="0" stop-color="#393833"/><stop offset=".4" stop-color="#45433c"/><stop offset="1" stop-color="#4a4840"/>
        </linearGradient>
        <linearGradient id="gBack" gradientUnits="userSpaceOnUse" x1="1165" y1="0" x2="1186" y2="0">
          <stop offset="0" stop-color="#49473f"/><stop offset=".7" stop-color="#4a4840"/><stop offset="1" stop-color="#6a6960"/>
        </linearGradient>
        <linearGradient id="gDisk" gradientUnits="userSpaceOnUse" x1="1090" y1="420" x2="1185" y2="470">
          <stop offset="0" stop-color="#74716a"/><stop offset=".4" stop-color="#88847a"/><stop offset="1" stop-color="#8d897d"/>
        </linearGradient>
        <linearGradient id="gPit" x1="0" y1="0" x2="0" y2="1"><stop offset="0" stop-color="#46443e"/><stop offset="1" stop-color="#5f5d55"/></linearGradient>
      </defs>
      <path d="M374,662 C390,642 405,634 417,628 L917,448 L1000,458 L917,453 L420,636 Z" fill="#000" opacity=".1" filter="url(#b3)"/>
      <path d="M1164,546 L1186,512 L1192,540 L1182,560 Z" fill="#000" opacity=".22" filter="url(#b5)"/>

      <path d="M252,497 L1050,210 C1056,208 1063,210 1067,215 L1158,377 L1145,377 L1055,217 L1053,217 L260,502 Z" fill="#7b786d"/>
      <path d="M1053,215 C1058,209 1063,210 1067,215 L1158,377 L1145,377 Z" fill="url(#gCham)"/>

      <path d="${back}" fill="url(#gBack)"/>
      <path d="${back}" ${K}/>
      <path d="${disk}" fill="url(#gDisk)"/>
      <path d="M1145,377 C1150,375 1154,376 1157,377 C1159,379 1159,381 1159,401 L1113,413 C1102,419 1092,428 1088,437 C1082,425 1086,410 1095,402 C1105,393 1125,386 1145,377 Z" fill="url(#gNotch)"/>
      <path d="M1113,390 V413 M1159,381 V401 L1113,413 C1102,419 1092,428 1088,437" ${K}/>
      <path d="M1126,457 V448 C1126,445 1142,445 1142,448 V457 C1142,461 1126,461 1126,457 Z" fill="#47453e" stroke="#1e1d1a" stroke-width=".9"/>
      <ellipse cx="1134" cy="447" rx="8" ry="5.500" fill="#7d7a6f" stroke="#1e1d1a" stroke-width="1"/>

      <path d="${cavity}" fill="#646763"/>
      <g clip-path="url(#cav)" filter="url(#b1)" fill="none">
        <path d="${U}" stroke="#83847e" stroke-width="33"/>
        <path d="${U}" stroke="#a8a599" stroke-width="24"/>
        <path d="${U}" stroke="#96928a" stroke-width="11"/>
        <path d="M914,334 C928,329 942,327 953,327 C968,327.500 982,331 993,336.700 C1010,344 1023,354 1032,365" stroke="#dcd9cd" stroke-width="4.500" opacity=".9"/>
        <path d="M363,615 C357,600 355,590 357,575 C359,558 370,538 393,522" stroke="#55554d" stroke-width="6" opacity=".45"/>
      </g>
      <path d="${wall}" fill="url(#gWall)"/>
      <path d="${wall}" ${K}/>
      <path d="M917,345 V444 M911.700,324 L917,345 M411.700,505 L416.700,525 V623" ${K}/>

      <path d="${T}" fill="url(#gTop)"/>
      <path d="M260,502 L1053,217 L1145,377 C1125,386 1105,393 1095,402 C1086,410 1082,425 1088,437 C1095,452 1115,468 1140,467 L1155,463 L1168,486 L890,587 L852,523 L993,473 L1020,458 C1032,452 1042,446 1050,433 C1055,426 1058,415 1058,400 C1058,388 1050,372 1036.7,356.7 C1028,346 1015,335 996.7,326.7 C985,321 970,317 953,316.7 C940,316 925,318 911.7,324 L411.7,505 C405,507 398,509 390,513 C368,525 350,550 349,573 C349,590 351,605 358,615 L328,626" ${K}/>
      <path d="M858,525 L995,477" ${K}/>

      <path d="M252,497 L328,626 L328,742 L257,617 C253,610 252,605 252,597 Z" fill="url(#gLeft)"/>
      <path d="M252,597 V497 L328,626 V742" ${K}/>
      <path d="M257,617 L328,742" stroke="#8a1c1c" stroke-width="1.300" fill="none"/>
      <path d="M328,626 L360,616 C365,615 371,614 372,619 L372.700,717 C372,725 365,730 358,732 L328,742 Z" fill="#4e4b44"/>
      <path d="M328,626 L360,616 C365,615 371,614 372,619 L372.700,717 C372,725 365,730 358,732 L328,742 Z" ${K}/>

      <path d="${side}" fill="url(#gLeft2)"/>
      <path d="${front}" fill="url(#gFront)"/>
      <path d="M852,623 V523 L890,587 C885,610 884,650 890,702 L857,640 C853,634 852,630 852,623 M890,587 L1168,486 C1163,510 1163,525 1164,545 C1164,565 1166,585 1168,601 L890,702" ${K}/>
      <path d="M900,607 L1092,538 V588 L901,657 Z" fill="url(#gHole)"/>
      <path d="M1070,546.700 L1092,538 V588 Z" fill="url(#gHoleR)"/>
      <path d="M900,607 L1092,538 V588 L901,657 Z M1070,546.700 L1092,588" ${K}/>

      <ellipse cx="954.300" cy="610.700" rx="10.500" ry="8" fill="#57554e" stroke="#1e1d1a"/>
      <ellipse cx="1035.700" cy="581.700" rx="10.500" ry="8" fill="#57554e" stroke="#1e1d1a"/>
      <ellipse cx="954.300" cy="528.300" rx="10.500" ry="8" fill="url(#gPit)" stroke="#1e1d1a"/>
      <ellipse cx="1035.700" cy="498.300" rx="10.500" ry="8" fill="url(#gPit)" stroke="#1e1d1a"/>`;
  }

  cube() {
    return `<path d="M1830,215 L1890,200 L1892,226 L1850,248 Z" fill="#000" opacity=".14" filter="url(#b5)"/>
      <path d="M1825,173 L1866.500,162 L1891,197 L1841,212 Z" fill="#f2f2f2" fill-opacity=".7"/>
      <path d="M1841,212 L1891,197 L1886,222 L1845,238 Z" fill="#f0f0f0" fill-opacity=".8"/>
      <path d="M1825,173 L1841,212 L1845,238 L1829,205 Z" fill="#eee" fill-opacity=".7"/>
      <g fill="none" stroke="#999" stroke-width=".8" stroke-dasharray="4 2"><path d="M1825,173 L1866.500,162 L1891,197 L1841,212 Z M1841,212 L1845,238 L1886,222 L1891,197 M1825,173 L1829,205 L1845,238"/></g>
      <path d="M1823,170 L1828,203" stroke="#7d7dff" stroke-width="1.300"/><path d="M1828,203 L1848,246" stroke="#ff8a8a" stroke-width="1.300"/>
      <text x="1821" y="169" font-family="Liberation Sans" font-size="12" fill="#6f6ff5" text-anchor="middle">Z</text>
      <text x="1850" y="258" font-family="Liberation Sans" font-size="12" fill="#ff7a7a" text-anchor="middle">X</text>
      <text transform="translate(1853,186) rotate(68)" font-family="Liberation Sans" font-weight="bold" font-style="italic" font-size="10" fill="#9a9a9a" text-anchor="middle">TOP</text>
      <text transform="translate(1866,222) rotate(-20)" font-family="Liberation Sans" font-weight="bold" font-style="italic" font-size="9" fill="#9a9a9a" text-anchor="middle">RIGHT</text>`;
  }
}

class FxTimeline extends HTMLElement {
  constructor() {
    super();
    const seq = 'S E S E S E S E S E C S E S E S E S E F F F F F'.split(' ');
    const names = { S: 'tlsketch', E: 'extrude', C: 'construct', F: 'tlfillet' };
    const items = seq.map(s => `<div class="item">${svgIcon(names[s], 16)}</div>`).join('');
    const pb = (d, ml) => `<svg width="14" height="16" viewBox="0 0 14 16" style="margin-left:${ml}px;flex:none"><path d="${d}" fill="#444"/></svg>`;
    this.attachShadow({ mode: 'open' }).innerHTML = `
      <style>
        :host { display: flex; height: 50px; box-sizing: border-box; background: #f0f0f0; border-top: 2px solid #cfcfcf; padding: 16px 13px 0 10px; position: relative; flex: none; }
        .track { width: 580px; }
        .items { display: flex; height: 17px; }
        .item { width: 24px; display: flex; justify-content: center; flex: none; }
        .rail { margin: 4px 0 0 12px; width: 551px; height: 7px; box-sizing: border-box; border-bottom: 2px solid #ccc; background: repeating-linear-gradient(90deg, #ccc 0 1px, transparent 1px 24px); }
        .mark { position: absolute; left: 712px; top: 9px; width: 12px; height: 33px; }
        .gear { position: absolute; right: 13px; top: 15px; }
      </style>
      ${pb('M0 1H3V15H0zM13 0V16L3 8z', 1)}
      ${pb('M9 1V15L3 8zM10 4H13V12H10z', 11)}
      ${pb('M1 0L14 8 1 16z', 11)}
      ${pb('M5 1V15L11 8zM1 4H4V12H1z', 10)}
      ${pb('M14 1H11V15H14zM1 0V16L11 8z', 11)}
      <div class="track" style="margin-left:17px"><div class="items">${items}</div><div class="rail"></div></div>
      <svg class="mark" viewBox="0 0 12 33"><path d="M0 0H12V4L7 9V33H5V9L0 4z" fill="#555"/></svg>
      <svg class="gear" width="16" height="16" viewBox="0 0 32 32"><path d="M13 1h6l1 5 4 2 5-2 3 5-4 3v4l4 3-3 5-5-2-4 2-1 5h-6l-1-5-4-2-5 2-3-5 4-3v-4l-4-3 3-5 5 2 4-2z" fill="#8a8a8a"/><circle cx="16" cy="16" r="5.500" fill="#f0f0f0"/></svg>`;
  }
}

customElements.define('fx-titlebar', FxTitlebar);
customElements.define('fx-tabbar', FxTabbar);
customElements.define('fx-tool-group', FxToolGroup);
customElements.define('fx-toolbar', FxToolbar);
customElements.define('fx-tree-row', FxTreeRow);
customElements.define('fx-browser', FxBrowser);
customElements.define('fx-comments', FxComments);
customElements.define('fx-navbar', FxNavbar);
customElements.define('fx-viewport', FxViewport);
customElements.define('fx-timeline', FxTimeline);
</script>
</body>
</html>
